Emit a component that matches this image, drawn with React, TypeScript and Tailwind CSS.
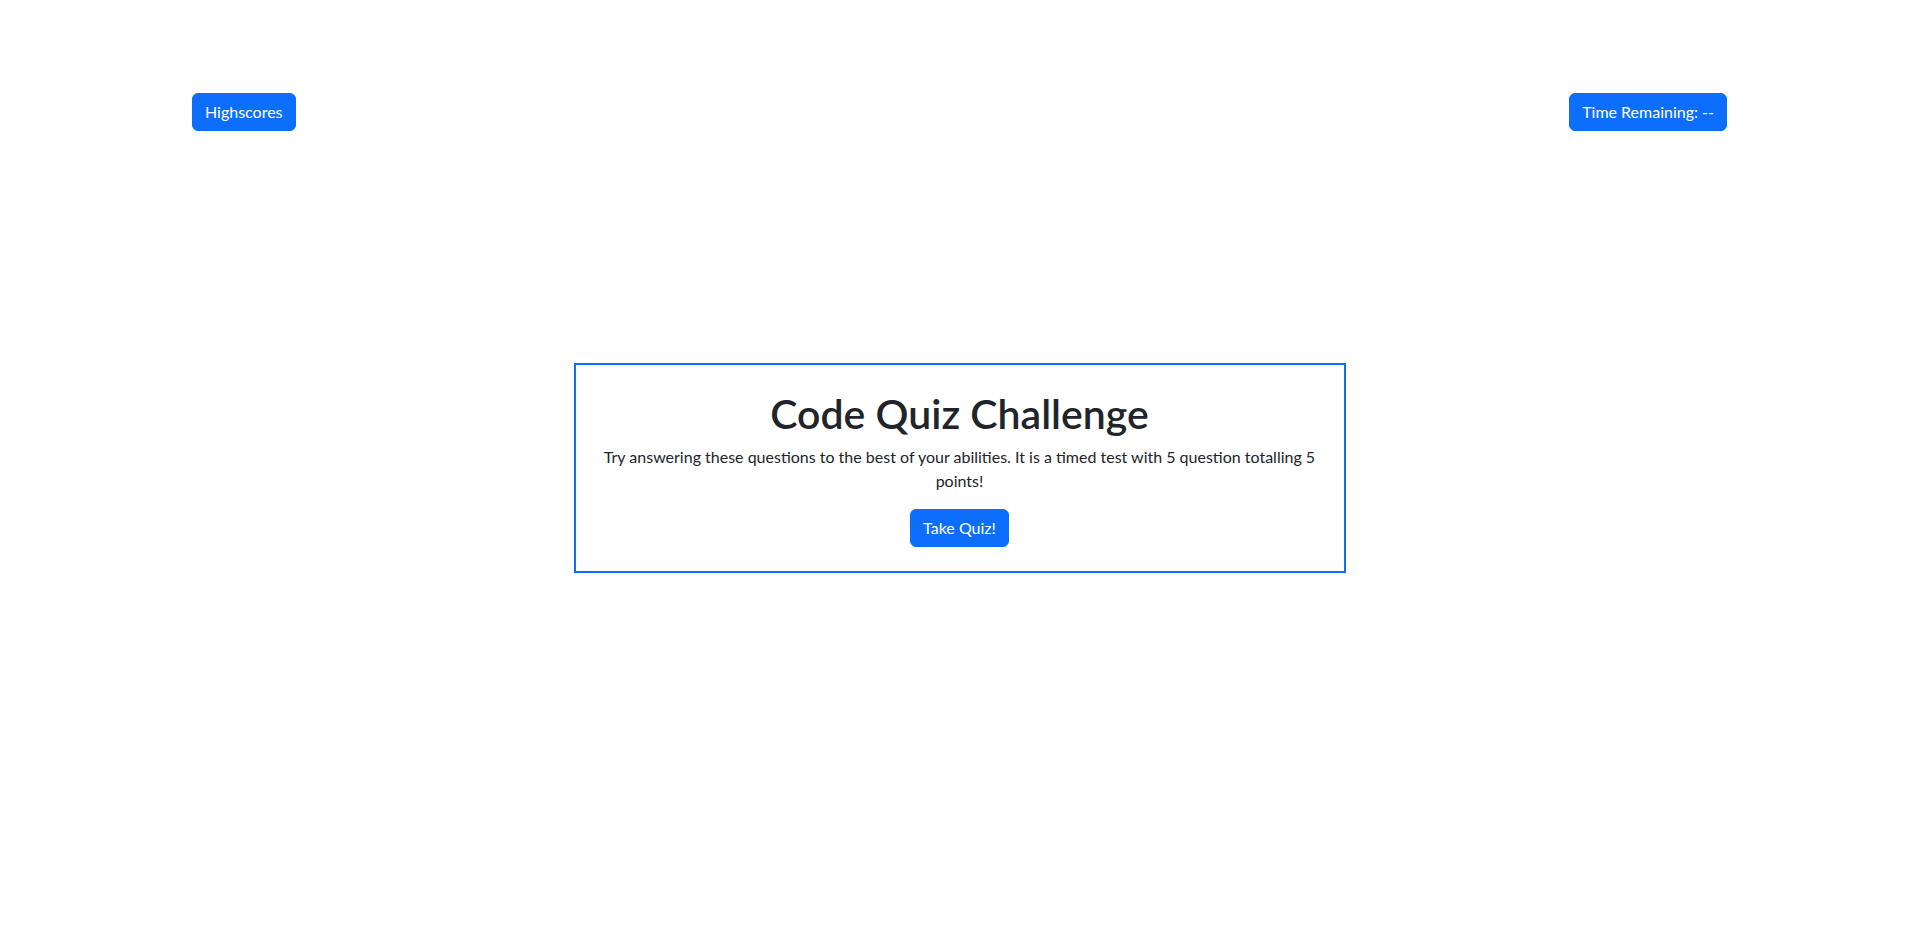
import React from 'react';

const btn =
  'bg-[#0d6efd] text-white text-[16px] leading-6 px-3 py-1.5 rounded-[6px] border border-[#0d6efd]';

export default function App() {
  return (
    <div className="min-h-[935px] bg-white text-[#212529] font-['Lato',sans-serif]">
      {/* Top bar */}
      <div className="flex justify-between items-start px-[192px] pt-[93px]">
        <button className={btn}>Highscores</button>
        <button className={btn}>Time Remaining: --</button>
      </div>

      {/* Start card */}
      <div className="mx-auto mt-[232px] w-[772px] border-2 border-[#0d6efd] p-6 text-center">
        <h1 className="text-[41px] leading-[46px] pt-[2px] font-semibold mb-2">Code Quiz Challenge</h1>
        <p className="text-[16px] leading-6 mb-4">
          Try answering these questions to the best of your abilities. It is a timed test with 5 question totalling 5 points!
        </p>
        <button className={btn}>Take Quiz!</button>
      </div>
    </div>
  );
}
